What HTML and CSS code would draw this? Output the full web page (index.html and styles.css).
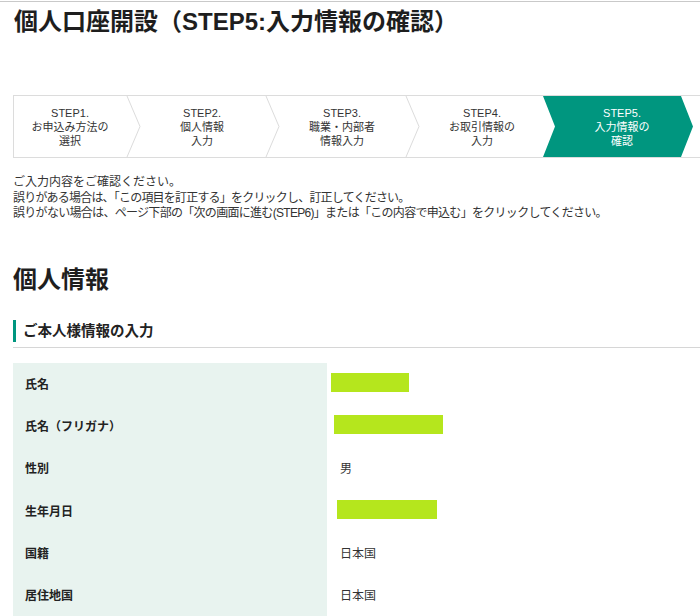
FILE: index.html
```html
<!DOCTYPE html>
<html lang="ja">
<head>
<meta charset="utf-8">
<link rel="stylesheet" href="styles.css">
</head>
<body>
<div class="page">
  <h1 class="title">個人口座開設（STEP5:入力情報の確認）</h1>

  <div class="steps">
    <div class="step first">
      <svg class="shape" width="160" height="61" viewBox="0 0 160 61"><polyline points="113,0 126,30.5 113,61" fill="none" stroke="#dcdcdc" stroke-width="1"/></svg>
      <div class="label">STEP1.<br>お申込み方法の<br>選択</div>
    </div>
    <div class="step">
      <svg class="shape" width="160" height="61" viewBox="0 0 160 61"><polyline points="140,0 153,30.5 140,61" fill="none" stroke="#dcdcdc" stroke-width="1"/></svg>
      <div class="label">STEP2.<br>個人情報<br>入力</div>
    </div>
    <div class="step">
      <svg class="shape" width="160" height="61" viewBox="0 0 160 61"><polyline points="140,0 153,30.5 140,61" fill="none" stroke="#dcdcdc" stroke-width="1"/></svg>
      <div class="label">STEP3.<br>職業・内部者<br>情報入力</div>
    </div>
    <div class="step">
      <div class="label">STEP4.<br>お取引情報の<br>入力</div>
    </div>
    <div class="step active">
      <svg class="shape active-shape" width="160" height="61" viewBox="0 0 160 61"><polygon points="0,0 138,0 150,30.5 138,61 0,61 12,30.5" fill="#00967f"/></svg>
      <div class="label">STEP5.<br>入力情報の<br>確認</div>
    </div>
    <div class="step"></div>
  </div>

  <div class="intro">
    <p>ご入力内容をご確認ください。</p>
    <p class="tight2">誤りがある場合は、「この項目を訂正する」をクリックし、訂正してください。</p>
    <p class="tight3">誤りがない場合は、ページ下部の「次の画面に進む(STEP6)」または「この内容で申込む」をクリックしてください。</p>
  </div>

  <h2 class="section">個人情報</h2>

  <div class="subhead"><span class="subhead-text">ご本人様情報の入力</span></div>

  <div class="info">
    <div class="row"><div class="key">氏名</div><div class="val"><span class="mask m1"></span></div></div>
    <div class="row"><div class="key">氏名（フリガナ）</div><div class="val"><span class="mask m2"></span></div></div>
    <div class="row"><div class="key">性別</div><div class="val">男</div></div>
    <div class="row"><div class="key">生年月日</div><div class="val"><span class="mask m3"></span></div></div>
    <div class="row"><div class="key">国籍</div><div class="val">日本国</div></div>
    <div class="row"><div class="key">居住地国</div><div class="val">日本国</div></div>
  </div>
</div>
</body>
</html>
```

FILE: styles.css
```css
html, body {
  margin: 0;
  padding: 0;
  background: #fff;
}
body {
  width: 700px;
  overflow: hidden;
  font-family: "Liberation Sans", "Noto Sans CJK JP", sans-serif;
  color: #333;
}
.page {
  margin-top: 1px;
  border-top: 1px solid #c9c9c9;
  padding-left: 13px;
}
.title {
  margin: 5px 0 0 1px;
  font-size: 24px;
  line-height: 30px;
  font-weight: bold;
  color: #1e1e1e;
}
.steps {
  margin-top: 58px;
  display: flex;
  width: 900px;
  height: 61px;
  border-top: 1px solid #dcdcdc;
  border-bottom: 1px solid #dcdcdc;
  border-left: 1px solid #dcdcdc;
}
.step {
  position: relative;
  flex: 0 0 140px;
  display: flex;
  align-items: center;
  justify-content: center;
  padding-left: 12px;
  box-sizing: border-box;
}
.step.first {
  flex: 0 0 112px;
  padding-left: 0;
}
.shape {
  position: absolute;
  left: 0;
  top: 0;
  overflow: visible;
}
.active-shape {
  left: -3px;
}
.label {
  position: relative;
  font-size: 11px;
  line-height: 14px;
  text-align: center;
  color: #333;
}
.active .label {
  color: #fff;
}
.intro {
  margin-top: 17px;
  font-size: 12px;
  line-height: 15.5px;
  color: #333;
}
.intro p {
  margin: 0;
  white-space: nowrap;
}
.intro .tight2 {
  letter-spacing: -0.8px;
}
.intro .tight3 {
  letter-spacing: -0.7px;
}
.section {
  margin: 43px 0 0 0;
  font-size: 24px;
  line-height: 30px;
  font-weight: bold;
  color: #1e1e1e;
}
.subhead {
  margin-top: 25px;
  padding-bottom: 5px;
  border-bottom: 1px solid #d6d6d6;
}
.subhead-text {
  display: block;
  border-left: 3px solid #00967f;
  padding-left: 7px;
  font-size: 14.5px;
  line-height: 22px;
  font-weight: bold;
  color: #222;
}
.info {
  margin-top: 15px;
}
.row {
  display: flex;
  height: 42.2px;
}
.key {
  flex: 0 0 314px;
  box-sizing: border-box;
  padding-left: 12px;
  background: #e8f3ef;
  display: flex;
  align-items: center;
  font-size: 12px;
  font-weight: bold;
  color: #222;
}
.val {
  flex: 1;
  display: flex;
  align-items: center;
  padding-left: 13px;
  font-size: 12px;
  color: #333;
}
.mask {
  display: inline-block;
  background: #b5e61d;
}
.m1 { width: 78px; height: 19px; margin-left: -9px; margin-top: -2px; }
.m2 { width: 109px; height: 19px; margin-left: -6px; margin-top: -2px; }
.m3 { width: 100px; height: 19px; margin-left: -3px; margin-top: -2px; }
```
